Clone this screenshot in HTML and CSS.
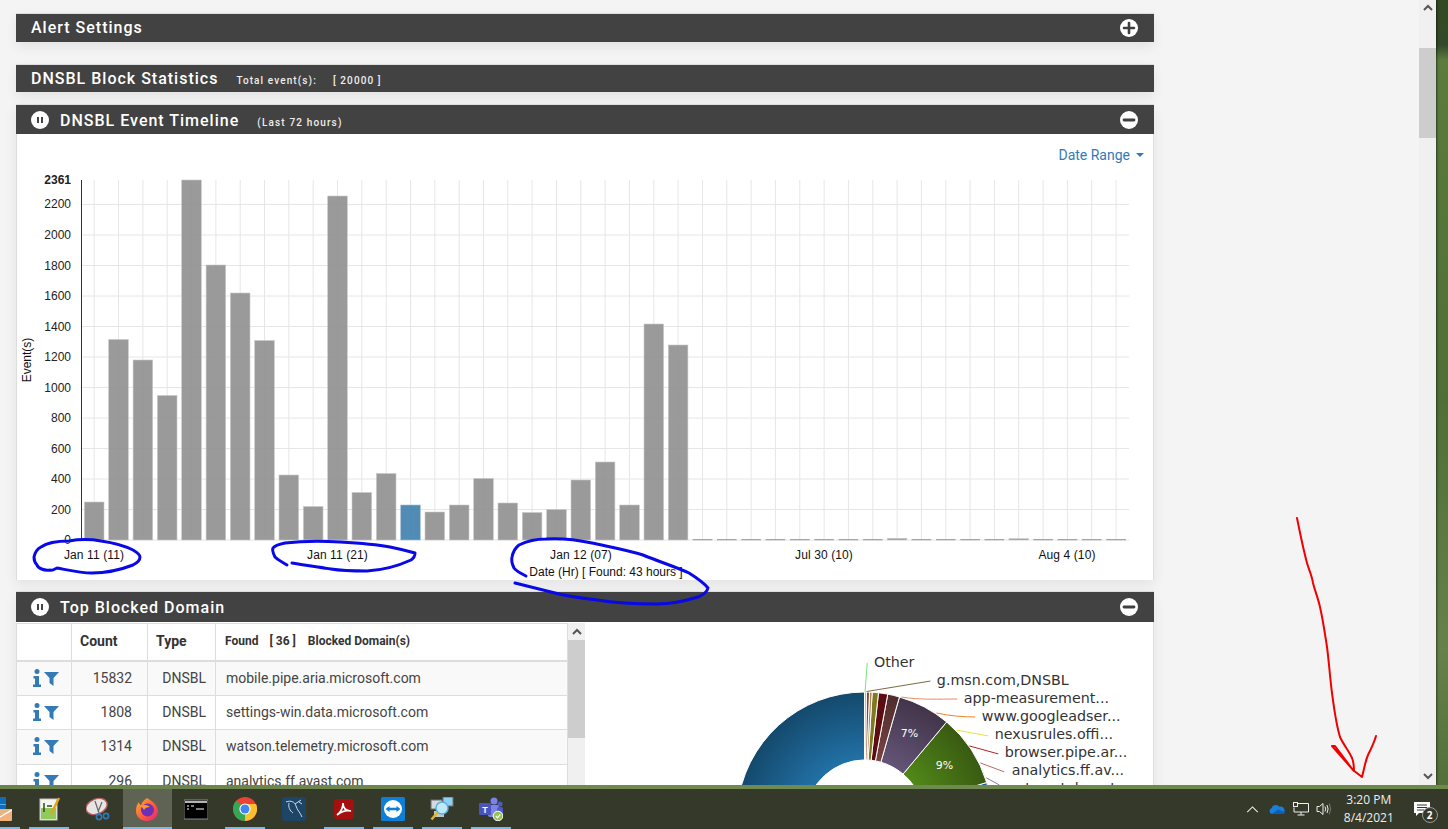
FILE: index.html
```html
<!DOCTYPE html>
<html lang="en">
<head>
<meta charset="utf-8">
<title>DNSBL Reports</title>
<link rel="stylesheet" href="styles.css">
</head>
<body>
<div class="screen">
  <div class="window">
    <main class="page">
      <section class="panel panel-alert">
        <header class="panel-head">
          <h2 class="title">Alert Settings</h2>
          <svg class="round-btn" viewBox="0 0 18 18"><circle cx="9" cy="9" r="9" fill="#fff"/><path d="M4 9H14M9 4V14" stroke="#3f3f3f" stroke-width="2.6" stroke-linecap="round"/></svg>
        </header>
      </section>

      <section class="panel panel-stats">
        <header class="panel-head">
          <h2 class="title">DNSBL Block Statistics</h2>
          <span class="sub sub-total">Total event(s):</span>
          <span class="sub sub-count">[ 20000 ]</span>
        </header>
      </section>

      <section class="panel panel-timeline">
        <header class="panel-head panel-head-tall">
          <svg class="round-btn pause" viewBox="0 0 18 18"><circle cx="9" cy="9" r="9" fill="#fff"/><path d="M7 6V12M11 6V12" stroke="#444" stroke-width="2"/></svg>
          <h2 class="title">DNSBL Event Timeline</h2>
          <span class="sub sub-hours">(Last 72 hours)</span>
          <svg class="round-btn" viewBox="0 0 18 18"><circle cx="9" cy="9" r="9" fill="#fff"/><path d="M4 9H14" stroke="#3f3f3f" stroke-width="2.8" stroke-linecap="round"/></svg>
        </header>
        <div class="panel-body">
          <div class="toolbar"><a class="range">Date Range<i class="caret"></i></a></div>
          <svg class="chart" width="1136" height="406" viewBox="17 174 1136 406">
            <path class="grid" d="M94.2 180V540M118.5 180V540M142.9 180V540M167.2 180V540M191.5 180V540M215.9 180V540M240.2 180V540M264.5 180V540M288.8 180V540M313.2 180V540M337.5 180V540M361.8 180V540M386.2 180V540M410.5 180V540M434.8 180V540M459.2 180V540M483.5 180V540M507.8 180V540M532.1 180V540M556.5 180V540M580.8 180V540M605.1 180V540M629.5 180V540M653.8 180V540M678.1 180V540M702.5 180V540M726.8 180V540M751.1 180V540M775.4 180V540M799.8 180V540M824.1 180V540M848.4 180V540M872.8 180V540M897.1 180V540M921.4 180V540M945.8 180V540M970.1 180V540M994.4 180V540M1018.7 180V540M1043.1 180V540M1067.4 180V540M1091.7 180V540M1116.1 180V540"/>
            <path class="grid" d="M81 204.5H1129M81 235H1129M81 265.5H1129M81 296H1129M81 326.5H1129M81 357H1129M81 387.5H1129M81 418H1129M81 448.5H1129M81 479H1129M81 509.5H1129M81 540H1129"/>
            <g class="bars">
              <rect x="84.4" y="502" width="19.6" height="38"/>
              <rect x="108.7" y="339.5" width="19.6" height="200.5"/>
              <rect x="133.1" y="360" width="19.6" height="180"/>
              <rect x="157.4" y="395.5" width="19.6" height="144.5"/>
              <rect x="181.7" y="180" width="19.6" height="360"/>
              <rect x="206.1" y="265" width="19.6" height="275"/>
              <rect x="230.4" y="293" width="19.6" height="247"/>
              <rect x="254.7" y="340.5" width="19.6" height="199.5"/>
              <rect x="279" y="475" width="19.6" height="65"/>
              <rect x="303.4" y="506.5" width="19.6" height="33.5"/>
              <rect x="327.7" y="196" width="19.6" height="344"/>
              <rect x="352" y="492.5" width="19.6" height="47.5"/>
              <rect x="376.4" y="473.5" width="19.6" height="66.5"/>
              <rect class="hot" x="400.7" y="505" width="19.6" height="35"/>
              <rect x="425" y="512" width="19.6" height="28"/>
              <rect x="449.4" y="505" width="19.6" height="35"/>
              <rect x="473.7" y="478.5" width="19.6" height="61.5"/>
              <rect x="498" y="503" width="19.6" height="37"/>
              <rect x="522.3" y="512.5" width="19.6" height="27.5"/>
              <rect x="546.7" y="509.5" width="19.6" height="30.5"/>
              <rect x="571" y="480" width="19.6" height="60"/>
              <rect x="595.3" y="462" width="19.6" height="78"/>
              <rect x="619.7" y="505" width="19.6" height="35"/>
              <rect x="644" y="324" width="19.6" height="216"/>
              <rect x="668.3" y="345" width="19.6" height="195"/>
              <rect class="dash" x="692.7" y="539.3" width="19.6" height=".9"/>
              <rect class="dash" x="717" y="539.3" width="19.6" height=".9"/>
              <rect class="dash" x="741.3" y="539.3" width="19.6" height=".9"/>
              <rect class="dash" x="765.6" y="539.3" width="19.6" height=".9"/>
              <rect class="dash" x="790" y="539.3" width="19.6" height=".9"/>
              <rect class="dash" x="814.3" y="539.3" width="19.6" height=".9"/>
              <rect class="dash" x="838.6" y="539.3" width="19.6" height=".9"/>
              <rect class="dash" x="863" y="539.3" width="19.6" height=".9"/>
              <rect x="887.3" y="538.3" width="19.6" height="1.7"/>
              <rect class="dash" x="911.6" y="539.3" width="19.6" height=".9"/>
              <rect class="dash" x="936" y="539.3" width="19.6" height=".9"/>
              <rect class="dash" x="960.3" y="539.3" width="19.6" height=".9"/>
              <rect class="dash" x="984.6" y="539.3" width="19.6" height=".9"/>
              <rect x="1008.9" y="538.7" width="19.6" height="1.3"/>
              <rect class="dash" x="1033.3" y="539.3" width="19.6" height=".9"/>
              <rect class="dash" x="1057.6" y="539.3" width="19.6" height=".9"/>
              <rect class="dash" x="1081.9" y="539.3" width="19.6" height=".9"/>
              <rect class="dash" x="1106.3" y="539.3" width="19.6" height=".9"/>
            </g>
            <path class="axis" d="M81.5 180V540"/>
            <g class="ticks">
              <text class="tick-max" x="71" y="183.500">2361</text>
              <text x="71" y="208">2200</text>
              <text x="71" y="239">2000</text>
              <text x="71" y="269.500">1800</text>
              <text x="71" y="300">1600</text>
              <text x="71" y="330.500">1400</text>
              <text x="71" y="361">1200</text>
              <text x="71" y="391.500">1000</text>
              <text x="71" y="422">800</text>
              <text x="71" y="452.500">600</text>
              <text x="71" y="483">400</text>
              <text x="71" y="513.500">200</text>
              <text x="71" y="544">0</text>
            </g>
            <g class="xlabels">
              <text class="xdate" x="94" y="559">Jan 11 (11)</text>
              <text class="xdate" x="337.500" y="559">Jan 11 (21)</text>
              <text class="xdate" x="581" y="559">Jan 12 (07)</text>
              <text class="xdate" x="824" y="559">Jul 30 (10)</text>
              <text class="xdate" x="1067" y="559">Aug 4 (10)</text>
              <text x="606" y="576">Date (Hr) [ Found: 43 hours ]</text>
              <text transform="translate(31 360) rotate(-90)">Event(s)</text>
            </g>
          </svg>
        </div>
      </section>

      <section class="panel panel-domains">
        <header class="panel-head panel-head-top">
          <svg class="round-btn pause" viewBox="0 0 18 18"><circle cx="9" cy="9" r="9" fill="#fff"/><path d="M7 6V12M11 6V12" stroke="#444" stroke-width="2"/></svg>
          <h2 class="title">Top Blocked Domain</h2>
          <svg class="round-btn" viewBox="0 0 18 18"><circle cx="9" cy="9" r="9" fill="#fff"/><path d="M4 9H14" stroke="#3f3f3f" stroke-width="2.8" stroke-linecap="round"/></svg>
        </header>
        <div class="panel-body domains-body">
          <div class="table-wrap">
            <table class="domains">
              <colgroup><col class="c-act"><col class="c-count"><col class="c-type"><col class="c-name"></colgroup>
              <thead>
                <tr><th></th><th>Count</th><th>Type</th><th class="th-small">Found<span class="th-count">[ 36 ]</span>Blocked Domain(s)</th></tr>
              </thead>
              <tbody>
                <tr><td class="act"><svg class="i-info" viewBox="0 0 8 18"><circle cx="4" cy="2.500" r="2.500"/><path d="M.5 7H6V15.500H8V18H0V15.500H2V9.500H.5Z"/></svg><svg class="i-filter" viewBox="0 0 15 14"><path d="M0 0H15L9.500 6V14L5.500 11V6Z"/></svg></td><td class="num count">15832</td><td class="num">DNSBL</td><td>mobile.pipe.aria.microsoft.com</td></tr>
                <tr><td class="act"><svg class="i-info" viewBox="0 0 8 18"><circle cx="4" cy="2.500" r="2.500"/><path d="M.5 7H6V15.500H8V18H0V15.500H2V9.500H.5Z"/></svg><svg class="i-filter" viewBox="0 0 15 14"><path d="M0 0H15L9.500 6V14L5.500 11V6Z"/></svg></td><td class="num count">1808</td><td class="num">DNSBL</td><td>settings-win.data.microsoft.com</td></tr>
                <tr><td class="act"><svg class="i-info" viewBox="0 0 8 18"><circle cx="4" cy="2.500" r="2.500"/><path d="M.5 7H6V15.500H8V18H0V15.500H2V9.500H.5Z"/></svg><svg class="i-filter" viewBox="0 0 15 14"><path d="M0 0H15L9.500 6V14L5.500 11V6Z"/></svg></td><td class="num count">1314</td><td class="num">DNSBL</td><td>watson.telemetry.microsoft.com</td></tr>
                <tr><td class="act"><svg class="i-info" viewBox="0 0 8 18"><circle cx="4" cy="2.500" r="2.500"/><path d="M.5 7H6V15.500H8V18H0V15.500H2V9.500H.5Z"/></svg><svg class="i-filter" viewBox="0 0 15 14"><path d="M0 0H15L9.500 6V14L5.500 11V6Z"/></svg></td><td class="num count">296</td><td class="num">DNSBL</td><td>analytics.ff.avast.com</td></tr>
              </tbody>
            </table>
            <div class="mini-scroll">
              <svg class="mini-arrow" viewBox="0 0 10 7"><path d="M1 6L5 2L9 6" fill="none" stroke="#555" stroke-width="2"/></svg>
              <div class="mini-thumb"></div>
            </div>
          </div>
          <svg class="pie" width="569" height="164" viewBox="585 622 569 164">
            <defs>
              <radialGradient id="gBlue" gradientUnits="userSpaceOnUse" cx="865" cy="820" r="128"><stop offset=".45" stop-color="#2272a8"/><stop offset="1" stop-color="#14496c"/></radialGradient>
              <radialGradient id="gGreen" gradientUnits="userSpaceOnUse" cx="865" cy="820" r="128"><stop offset=".45" stop-color="#528a18"/><stop offset="1" stop-color="#395a12"/></radialGradient>
              <radialGradient id="gPurple" gradientUnits="userSpaceOnUse" cx="865" cy="820" r="128"><stop offset=".45" stop-color="#65567a"/><stop offset="1" stop-color="#423448"/></radialGradient>
              <radialGradient id="gBrown" gradientUnits="userSpaceOnUse" cx="865" cy="820" r="128"><stop offset=".45" stop-color="#7a4444"/><stop offset="1" stop-color="#502c2c"/></radialGradient>
            </defs>
            <g class="slices">
              <path fill="url(#gBlue)" d="M865 692A128 128 0 1 0 987.400 857.400L922.400 838.800A60 60 0 1 1 865 760Z"/>
              <path fill="#1d5f8c" d="M987.400 782.600A128 128 0 0 1 993 820L925 820A60 60 0 0 0 922.400 802.500Z"/>
              <path fill="url(#gGreen)" d="M947.300 722A128 128 0 0 1 987.400 782.600L922.400 802.500A60 60 0 0 0 903.600 774.200Z"/>
              <path fill="url(#gPurple)" d="M900 697A128 128 0 0 1 947.300 722L903.600 774.200A60 60 0 0 0 881.400 762.300Z"/>
              <path fill="url(#gBrown)" d="M888.300 694.100A128 128 0 0 1 900 697L881.400 762.300A60 60 0 0 0 875.900 761Z"/>
              <path fill="#5c0d0f" d="M879 692.800A128 128 0 0 1 888.300 694.100L875.900 761A60 60 0 0 0 871.600 760.400Z"/>
              <path fill="#7f7a20" d="M872.700 692.200A128 128 0 0 1 879 692.800L871.600 760.400A60 60 0 0 0 868.600 760.100Z"/>
              <path fill="#a9855c" d="M870 692.100A128 128 0 0 1 872.700 692.200L868.600 760.100A60 60 0 0 0 867.300 760Z"/>
              <path fill="#7a4b2a" d="M867 692A128 128 0 0 1 870 692.100L867.300 760A60 60 0 0 0 866 760Z"/>
              <path fill="#b7aaa0" d="M865 692A128 128 0 0 1 867 692L866 760A60 60 0 0 0 865 760Z"/>
            </g>
            <g class="leaders">
              <path stroke="#7be07b" d="M865.500 692L867.700 663"/>
              <path stroke="#7a6a40" d="M867 691.500L931 681"/>
              <path stroke="#e88a5e" d="M902 697C920 700 940 699 958 699"/>
              <path stroke="#ef8424" d="M937 713C950 716 965 717 976 717"/>
              <path stroke="#e8e040" d="M957 730L989 736"/>
              <path stroke="#b22222" d="M970 746L999 754"/>
              <path stroke="#c06868" d="M981 763L1005 772"/>
              <path stroke="#8878a8" d="M987 778L1000 785"/>
            </g>
            <g class="pie-labels">
              <text x="874.500" y="667">Other</text>
              <text x="937.500" y="685">g.msn.com,DNSBL</text>
              <text x="964.500" y="703">app-measurement...</text>
              <text x="982.500" y="721">www.googleadser...</text>
              <text x="995.500" y="739">nexusrules.offi...</text>
              <text x="1005.500" y="757">browser.pipe.ar...</text>
              <text x="1012.500" y="775">analytics.ff.av...</text>
              <text x="1005.500" y="793">watson.telemet...</text>
            </g>
            <text class="pct" x="910" y="737">7%</text>
            <text class="pct" x="945" y="769">9%</text>
          </svg>
        </div>
      </section>
    </main>
    <aside class="v-scroll">
      <svg class="v-arrow" viewBox="0 0 10 7"><path d="M1 6L5 2L9 6" fill="none" stroke="#555" stroke-width="2"/></svg>
      <div class="v-thumb"></div>
      <svg class="v-arrow v-arrow-down" viewBox="0 0 10 7"><path d="M1 1L5 5L9 1" fill="none" stroke="#555" stroke-width="2"/></svg>
    </aside>
  </div>
  <div class="edge"></div>
  <footer class="taskbar">
    <div class="apps">
      <div class="app on"><svg viewBox="0 0 24 24" class="ico"><rect x="1" y="0" width="17" height="15" fill="#0f6cbd"/><path d="M9 0V15M1 7.500H18" stroke="#53b0f0"/><rect x="0" y="12" width="24" height="12" rx="1" fill="#eeb27a"/><path d="M0 13L12 20L24 13" fill="none" stroke="#fff" stroke-width="1.500"/></svg></div>
      <div class="app on"><svg viewBox="0 0 24 24" class="ico"><rect x="3" y="2" width="17" height="21" fill="#f4f6ee" stroke="#c8c8c8"/><rect x="4" y="11" width="15" height="11" fill="#8fcb5a"/><path d="M7 6V15M10 9H15" stroke="#2f4a20" stroke-width="1.500"/><path d="M14 17L22 1" stroke="#e3a41b" stroke-width="2.500"/></svg></div>
      <div class="app"><svg viewBox="0 0 24 24" class="ico"><ellipse cx="10.500" cy="9.500" rx="11" ry="7.500" fill="#e8e4e2" stroke="#b06060" stroke-width="1.400" transform="rotate(-22 10.500 9.500)"/><path d="M9 4L13 16M16 5L12 15" stroke="#666" stroke-width="1.200"/><circle cx="13" cy="20" r="2.600" fill="none" stroke="#2e7ab8" stroke-width="1.600"/><circle cx="20" cy="19" r="2.600" fill="none" stroke="#2e7ab8" stroke-width="1.600"/></svg></div>
      <div class="app on active"><svg viewBox="0 0 24 24" class="ico"><defs><linearGradient id="fx" x1="0" y1="0" x2="1" y2="1"><stop offset="0" stop-color="#ffb32c"/><stop offset=".55" stop-color="#ff5a3c"/><stop offset="1" stop-color="#e3207e"/></linearGradient></defs><path d="M12 1C15 3 17 4 19 6C22 9 23 12 23 14C23 20 18 24 12 24C6 24 1 20 1 14C1 10 2 7 4 5C4 7 5 8 6 8C7 5 9 3 12 1Z" fill="url(#fx)"/><circle cx="12.500" cy="13" r="6.500" fill="#6c2fb8"/><path d="M6 9C9 7 13 8 15 10C12 10 10 11 9 13C8 11 7 10 6 9Z" fill="#ff9b2e"/></svg></div>
      <div class="app"><svg viewBox="0 0 24 24" class="ico"><rect x="0" y="3" width="24" height="19" fill="#000" stroke="#8a8a8a"/><rect x="1" y="4" width="22" height="2" fill="#b5b5b5"/><path d="M3 9H5M3 12H5M7 9H10M12 12H20" stroke="#fff"/></svg></div>
      <div class="app on"><svg viewBox="0 0 24 24" class="ico"><circle cx="12" cy="12" r="12" fill="#ea4335"/><path d="M12 12L1.600 18A12 12 0 0 1 3.500 3.500Z" fill="#34a853"/><path d="M12 12L12 24A12 12 0 0 1 1.600 18Z" fill="#34a853"/><path d="M12 7H23A12 12 0 0 1 12 24Z" fill="#fbc02d"/><circle cx="12" cy="12" r="5.600" fill="#fff"/><circle cx="12" cy="12" r="4.500" fill="#4285f4"/></svg></div>
      <div class="app"><svg viewBox="0 0 24 24" class="ico"><rect width="24" height="24" rx="2" fill="#1c4568"/><path d="M4 5C9 3 13 5 14 9C15 13 18 15 20 20M7 6C6 10 8 14 11 16M13 7L19 3M17 5L20 7" fill="none" stroke="#cfdbe6" stroke-width="1"/></svg></div>
      <div class="app on"><svg viewBox="0 0 24 24" class="ico"><rect x="2" y="2" width="20" height="20" rx="3" fill="#a50f0f"/><path d="M5 18C9 15 11 10 11 6C11 10 13 14 19 14C14 13 9 15 5 18Z" fill="none" stroke="#fff" stroke-width="1.700"/></svg></div>
      <div class="app on"><svg viewBox="0 0 24 24" class="ico"><rect width="24" height="24" rx="1.500" fill="#0e7fd8"/><circle cx="12" cy="12" r="9" fill="#fff"/><path d="M4.500 12L8.500 9V10.800H15.500V9L19.500 12L15.500 15V13.200H8.500V15Z" fill="#0e7fd8"/></svg></div>
      <div class="app on"><svg viewBox="0 0 24 24" class="ico"><rect x="1" y="3" width="11" height="9" fill="#d5d8dc" stroke="#6b7075"/><rect x="13" y="0" width="10" height="9" fill="#8fd0f4" stroke="#6b7075"/><rect x="4" y="14" width="10" height="6" fill="#c3c6c9"/><circle cx="12" cy="11" r="6" fill="#bfe8fb" stroke="#5ab0de" stroke-width="1.500"/><path d="M7.500 15.500L1.500 22.500" stroke="#e6b52c" stroke-width="2.500"/></svg></div>
      <div class="app on"><svg viewBox="0 0 24 24" class="ico"><circle cx="15" cy="4" r="3.500" fill="#7b83eb"/><circle cx="21" cy="7" r="2.500" fill="#5059c9"/><rect x="9" y="8" width="11" height="12" rx="2" fill="#7b83eb"/><rect x="18" y="10" width="6" height="8" rx="2" fill="#5059c9"/><rect x="0" y="6" width="12" height="12" rx="1" fill="#4b53bc"/><text class="teams-t" x="6" y="15.500">T</text><circle cx="19" cy="19" r="4.800" fill="#92c353" stroke="#fff"/><path d="M16.800 19L18.500 20.800L21.300 17.500" fill="none" stroke="#fff" stroke-width="1.200"/></svg></div>
    </div>
    <div class="tray">
      <svg class="tray-ico t-chev" viewBox="0 0 14 8"><path d="M1 7L7 1L13 7" fill="none" stroke="#eee" stroke-width="1.200"/></svg>
      <svg class="tray-ico t-cloud" viewBox="0 0 16 10"><path d="M3 10A3 3 0 0 1 2.500 4.200A4.500 4.500 0 0 1 10.500 2.800A3.600 3.600 0 0 1 13 10Z" fill="#1a7fd6"/><path d="M3 10L9 5.500L16 8C16 9.500 15 10 13 10Z" fill="#0a5eb3"/></svg>
      <svg class="tray-ico t-net" viewBox="0 0 16 14"><path d="M4.500 1.500H15.500V10H1V5.500M8 10V13M4.500 13H11.500" fill="none" stroke="#eee"/><rect x=".5" y=".5" width="4" height="4" fill="#35392a" stroke="#eee"/></svg>
      <svg class="tray-ico t-vol" viewBox="0 0 16 14"><path d="M1 4.500H3.500L7 1.500V12.500L3.500 9.500H1Z" fill="none" stroke="#eee"/><path d="M9 4.500Q10.500 7 9 9.500M11 3Q13.200 7 11 11" fill="none" stroke="#eee"/><path d="M13.300 1.500Q16 7 13.300 12.500" fill="none" stroke="#777"/></svg>
      <div class="clock"><span>3:20 PM</span><span>8/4/2021</span></div>
      <div class="notify">
        <svg class="note" viewBox="0 0 16 14"><path d="M0 0H16V11H5L2 14V11H0Z" fill="#fff"/><path d="M3 3H13M3 5.500H13M3 8H10" stroke="#35392a"/></svg>
        <span class="badge">2</span>
      </div>
    </div>
  </footer>
  <svg class="ink" width="1448" height="829" viewBox="0 0 1448 829">
    <g class="ink-blue">
      <path d="M50 570C44 571 38 568 37 565C34 562 34 560 34 557C35 552 37 549 41 547C48 542 58 541 69 541C80 539 90 539 101 541C115 543 125 546 133 550C138 553 140 555 140 557C140 561 137 563 133 565C120 570 106 573 92 573C80 573 68 570 57 568C55 569 52 571 50 570"/>
      <path d="M287 565C284 563 278 560 275 557C273 553 272 550 273 548C275 545 280 544 285 543C303 541 322 541 340 542C358 543 374 544 390 547C400 549 408 551 415 553C415 556 414 558 411 560C398 566 384 570 367 571C355 571 343 571 331 569C318 567 304 565 292 563"/>
      <path d="M526 576C520 573 516 571 514 568C512 564 511 561 512 557C513 552 515 548 519 545C527 541 537 539 546 539C562 538 578 540 592 543C610 547 627 550 643 555C660 562 676 567 689 573C697 578 704 583 708 588C707 592 703 595 698 597C685 601 671 604 657 604C635 604 615 603 597 600C580 598 565 596 551 592C539 589 527 586 515 583"/>
    </g>
    <path class="ink-red" d="M1297 518C1300 533 1303 548 1307 563C1309 570 1312 576 1313 583C1315 591 1318 598 1320 607C1323 620 1325 634 1327 647C1329 662 1330 678 1332 693C1334 708 1336 724 1340 737C1343 744 1349 751 1352 758C1354 763 1354 767 1354 771L1332 746L1335 746L1353 770L1362 777C1364 770 1365 762 1368 755C1371 749 1374 743 1376 736"/>
  </svg>
</div>
</body>
</html>
```

FILE: styles.css
```css
* { box-sizing: border-box; }
html, body { margin: 0; height: 100%; overflow: hidden; }
body { font-family: Roboto, "Liberation Sans", sans-serif; color: #333; }

.screen {
  position: relative;
  width: 1448px;
  height: 829px;
  overflow: hidden;
  display: flex;
  flex-direction: column;
  background: linear-gradient(180deg, #344a24 0, #34492a 45px, #5b7c3d 60px, #4f6f36 400px, #66824a 650px, #54703a 785px);
}

.window {
  display: flex;
  width: 1436px;
  height: 785px;
  flex: none;
  box-shadow: 1px 0 2px rgba(0, 0, 0, .5);
}
.page {
  width: 1419px;
  height: 785px;
  overflow: hidden;
  padding: 13px 265px 0 16px;
  background: #f4f4f4;
}

.panel { background: #fff; box-shadow: 0 5px 12px rgba(0, 0, 0, .07); border-top: 1px solid #ddd; }
.panel-alert { margin-bottom: 22px; background: #444; }
.panel-stats { margin-bottom: 12px; background: #444; }
.panel-timeline { margin-bottom: 11px; }
.panel-head {
  display: flex;
  align-items: center;
  height: 28px;
  padding: 0 16px 0 15px;
  background: #424242;
  color: #fff;
}
.panel-stats .panel-head { height: 27px; }
.panel-head-tall { height: 29px; }
.panel-head-tall .title { padding-top: 2px; }
.panel-head-top { height: 30px; }
.panel-head-top .title { padding-top: 1px; }
.title {
  margin: 0;
  font-size: 16px;
  font-weight: 500;
  letter-spacing: 1px;
  line-height: 1;
}
.sub { font-size: 10px; letter-spacing: 1.100px; font-weight: 500; position: relative; top: 2px; color: #eee; }
.sub-total { margin-left: 18px; }
.sub-count { margin-left: 16px; }
.sub-hours { margin-left: 18px; font-size: 10px; letter-spacing: 1.150px; top: 2.500px; }
.round-btn { width: 18px; height: 18px; margin-left: auto; flex: none; }
.round-btn.pause { margin: 0 11px 0 0; }

.panel-body { border: 1px solid #ddd; border-width: 0 1px; background: #fff; }
.panel-timeline .panel-body { border-bottom-width: 0; }
.toolbar { display: flex; justify-content: flex-end; align-items: center; height: 40px; padding: 2px 9px 0 0; }
.range { color: #337ab7; font-size: 14px; display: flex; align-items: center; }
.caret { width: 0; height: 0; margin-left: 6px; border: 4px solid transparent; border-top-color: #337ab7; border-bottom-width: 0; }

.chart { display: block; }
.grid { fill: none; stroke: #e6e6e6; stroke-width: 1; }
.axis { stroke: #333; stroke-width: 1; fill: none; }
.bars rect { fill: #8f8f8f; fill-opacity: .9; stroke: #c9c9c9; stroke-width: .6; }
.bars rect.hot { fill: #3d80ad; stroke: #9fc0d8; }
.bars rect.dash { fill: #777; stroke: none; }
.ticks text { font: 12px "Liberation Sans", Arial, sans-serif; text-anchor: end; fill: #222; }
.ticks .tick-max { font-weight: 700; }
.xlabels text { font: 12px "Liberation Sans", Arial, sans-serif; text-anchor: middle; fill: #111; }
.xlabels .xdate { letter-spacing: .1px; }

.domains-body { display: flex; height: 200px; border-left: 0; border-right-width: 1px; }
.table-wrap { display: flex; flex: none; height: 163px; padding-top: 1px; }
.domains {
  width: 552px;
  table-layout: fixed;
  border-collapse: collapse;
  font-size: 14px;
  color: #444;
  align-self: flex-start;
}
.c-act { width: 55px; }
.c-count { width: 76px; }
.c-type { width: 68px; }
.domains th, .domains td { border: 1px solid #ddd; padding: 0 10px 1px; }
.domains th { height: 37px; text-align: left; color: #333; font-weight: 700; padding-left: 8px; padding-bottom: 2px; border-bottom-width: 2px; }
.domains .th-small { font-size: 12px; padding-left: 9px; }
.th-count { margin: 0 12px 0 11px; }
.domains td { height: 34.500px; }
.domains tbody tr:nth-child(odd) td { background: #f9f9f9; }
.domains .num { text-align: right; padding-right: 9px; }
.domains .count { padding-right: 15px; }
.domains .act { padding: 0 0 1px 16px; }
.i-info { width: 8px; height: 18px; fill: #337ab7; vertical-align: middle; }
.i-filter { width: 15px; height: 14px; fill: #337ab7; vertical-align: middle; margin: 2px 0 0 3px; }
.mini-scroll { width: 17px; height: 162px; background: #f0f0f0; flex: none; }
.mini-arrow { display: block; width: 10px; height: 7px; margin: 5px auto; }
.mini-thumb { height: 98px; background: #cdcdcd; }

.pie { display: block; overflow: hidden; }
.slices path { stroke: #fff; stroke-width: 1; }
.leaders path { fill: none; stroke-width: 1; }
.pie-labels text { font: 14.300px "DejaVu Sans", Verdana, sans-serif; fill: #333; }
.pct { font: 11px "DejaVu Sans", Verdana, sans-serif; fill: #fff; text-anchor: middle; }

.v-scroll { position: relative; width: 17px; background: #f0f0f0; flex: none; }
.v-arrow { display: block; width: 10px; height: 7px; margin: 4px auto 0; }
.v-thumb { height: 90px; margin-top: 37px; background: #cdcdcd; }
.v-arrow-down { margin-top: 635px; }

.edge { height: 4px; flex: none; background: linear-gradient(90deg, #69834a, #708a50 50%, #6b8a4b 100%); }

.taskbar {
  display: flex;
  justify-content: space-between;
  height: 40px;
  flex: none;
  background: #35392a;
  overflow: hidden;
}
.apps { display: flex; margin-left: -24.650px; }
.app {
  position: relative;
  display: flex;
  align-items: center;
  justify-content: center;
  width: 49.100px;
  height: 40px;
}
.ico { width: 24px; height: 24px; }
.app.on::after {
  content: "";
  position: absolute;
  left: 4.500px;
  right: 4.500px;
  bottom: 0;
  height: 2px;
  background: #76b9ed;
}
.app.active { background: #5f6353; }
.app.active::after { left: 0; right: 0; }
.teams-t { font: 700 9px "Liberation Sans", Arial, sans-serif; fill: #fff; text-anchor: middle; }

.tray { display: flex; align-items: center; width: 208px; }
.tray-ico { flex: none; display: block; }
.t-chev { width: 13px; height: 7px; margin-left: 6px; }
.t-cloud { width: 16px; height: 10px; margin-left: 10px; }
.t-net { width: 16px; height: 14px; margin-left: 8px; }
.t-vol { width: 16px; height: 14px; margin-left: 7px; }
.clock {
  display: flex;
  flex-direction: column;
  align-items: center;
  width: 72px;
  margin-left: 2px;
  color: #eee;
  font: 12px/18px "Open Sans", "Noto Sans", sans-serif;
}
.notify { position: relative; width: 46px; height: 40px; }
.note { position: absolute; left: 10px; top: 13px; width: 16px; height: 14px; }
.badge {
  position: absolute;
  left: 18px;
  top: 18px;
  width: 16px;
  height: 16px;
  border: 1px solid #9a9a9a;
  border-radius: 50%;
  background: #35392a;
  color: #fff;
  font: 700 10px/14px "Open Sans", sans-serif;
  text-align: center;
}

.ink { position: absolute; left: 0; top: 0; pointer-events: none; }
.ink-blue path { fill: none; stroke: #0808e8; stroke-width: 3; stroke-linecap: round; stroke-linejoin: round; }
.ink-red { fill: none; stroke: #f00000; stroke-width: 2; stroke-linecap: round; stroke-linejoin: round; }
```
